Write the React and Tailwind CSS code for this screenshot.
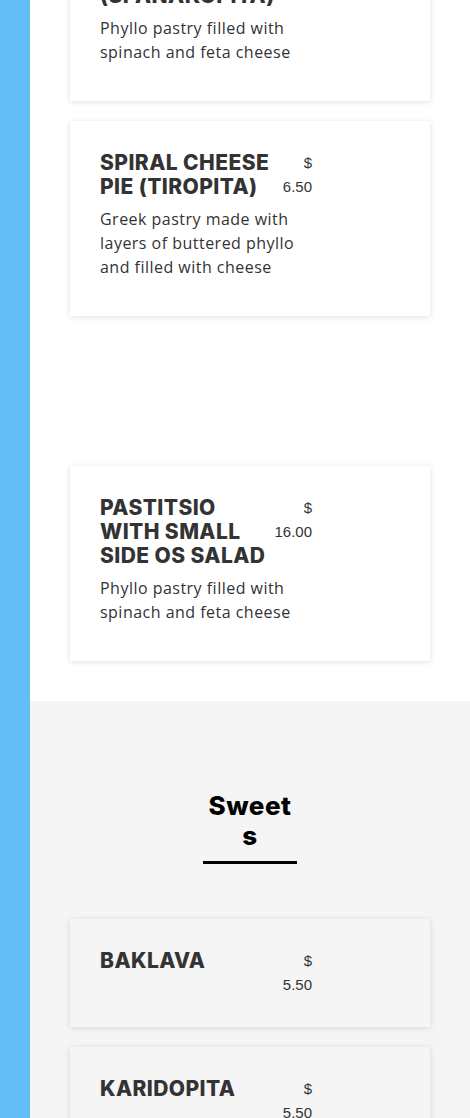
import React from "react";

function Card({ title, price, desc, gray }) {
  return (
    <div
      className={`${gray ? "bg-[#f5f5f5]" : "bg-white"} px-[30px] pt-[30px] pb-[30px] shadow-[0_1px_6px_rgba(0,0,0,0.13)]`}
    >
      <div className="w-[212px]">
        <div className="flex">
          <h3 className="w-[172px] shrink-0 text-[21px] leading-[24px] font-extrabold uppercase tracking-[0.02em] text-[#333333] font-['Inter',sans-serif]">
            {title}
          </h3>
          <div className="w-[40px] shrink-0 text-right text-[15px] leading-[24px] text-[#333333] font-['Liberation_Sans',Arial,sans-serif]">
            $ {price}
          </div>
        </div>
        {desc && (
          <p className="mt-2 mb-[7px] text-[16px] leading-[24px] tracking-[0.03em] text-[#333333] font-['Open_Sans',sans-serif]">
            {desc}
          </p>
        )}
      </div>
    </div>
  );
}

export default function App() {
  return (
    <div className="flex h-[1118px] overflow-hidden bg-white">
      <div className="w-[30px] shrink-0 bg-[#63bdf6]" />
      <main className="flex-1 min-w-0">
        <section className="bg-white px-[40px] pb-[40px] -mt-[94px] flex flex-col gap-[20px]">
          <Card
            title="Spinach Cheese Pie (Spanakopita)"
            price="6.00"
            desc="Phyllo pastry filled with spinach and feta cheese"
          />
          <Card
            title="Spiral Cheese Pie (Tiropita)"
            price="6.50"
            desc="Greek pastry made with layers of buttered phyllo and filled with cheese"
          />
          <div className="h-[110px]" />
          <Card
            title="Pastitsio with small side os salad"
            price="16.00"
            desc="Phyllo pastry filled with spinach and feta cheese"
          />
        </section>
        <section className="bg-[#f5f5f5] px-[40px] pt-[90px] pb-[40px]">
          <div className="flex justify-center">
            <h2 className="w-[94px] border-b-[3px] border-black pb-[10px] text-center text-[26px] leading-[30px] font-extrabold tracking-[0.02em] text-black break-all font-['Inter',sans-serif]">
              Sweets
            </h2>
          </div>
          <div className="mt-[55px] flex flex-col gap-[20px]">
            <Card title="Baklava" price="5.50" gray />
            <Card title="Karidopita" price="5.50" gray />
          </div>
        </section>
      </main>
    </div>
  );
}
